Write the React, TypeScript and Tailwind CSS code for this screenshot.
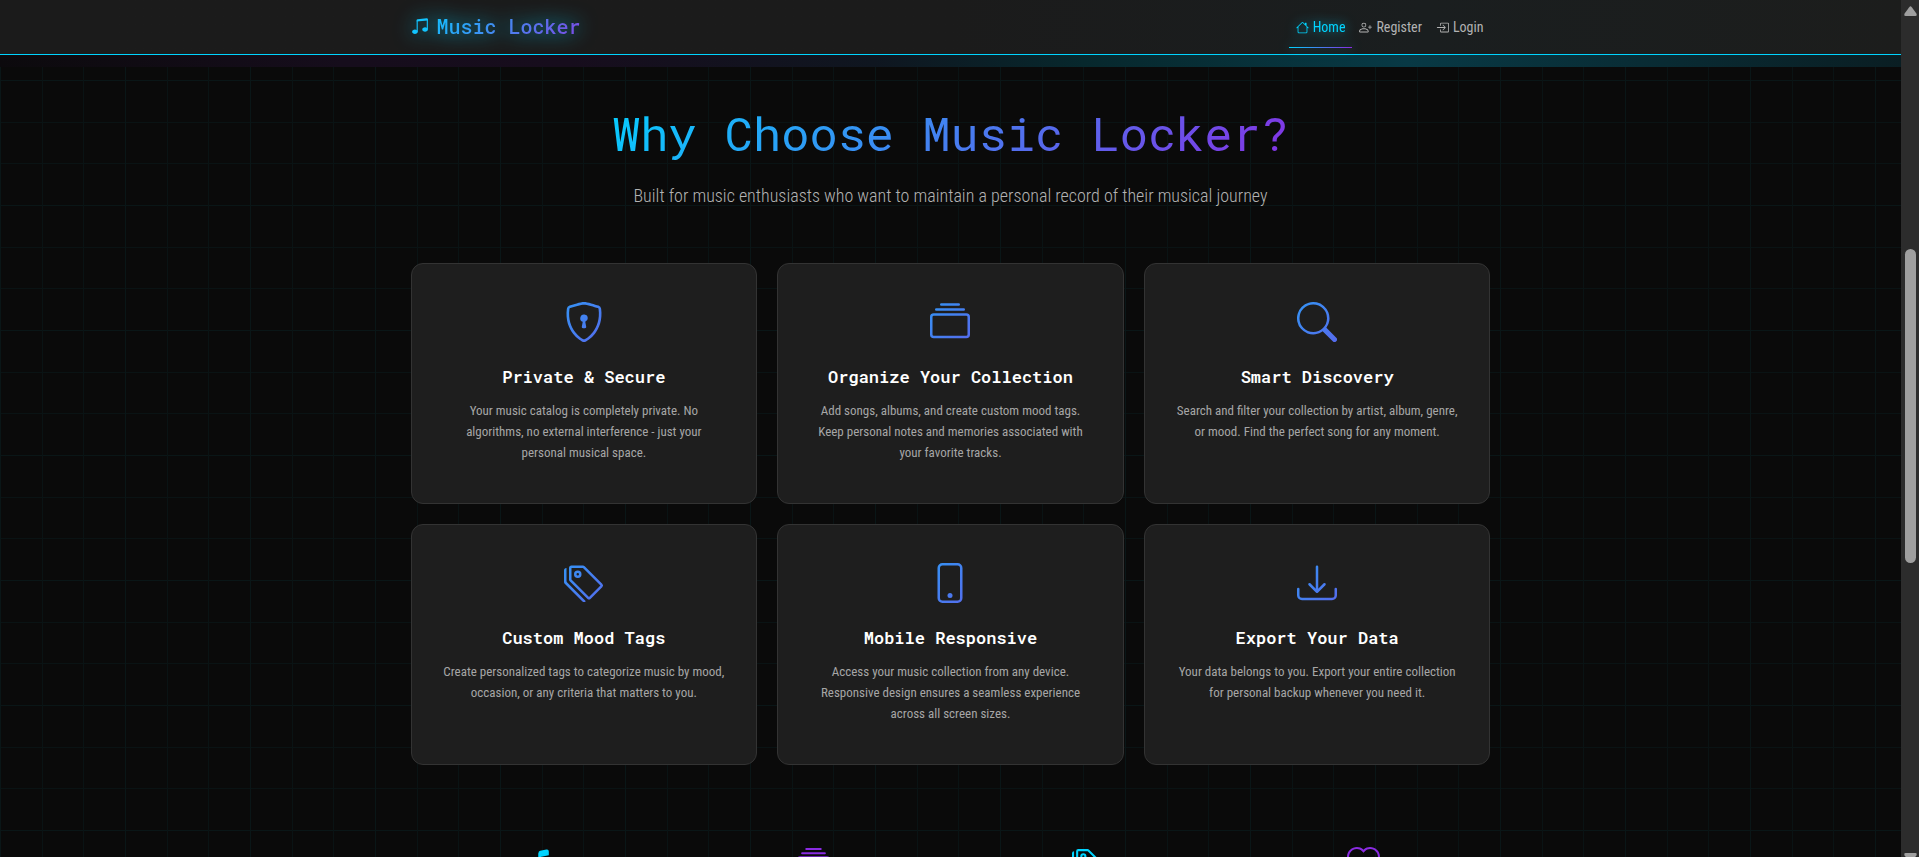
import type { IconType } from "react-icons";
import {
  BsBoxArrowInRight,
  BsCollection,
  BsDownload,
  BsHeart,
  BsHouse,
  BsMusicNote,
  BsMusicNoteBeamed,
  BsPersonPlus,
  BsPhone,
  BsSearch,
  BsShieldLock,
  BsTags,
} from "react-icons/bs";

type NavItem = { label: string; icon: IconType; active?: boolean };
type Feature = { title: string; text: string; icon: IconType };
type Stat = { name: string; icon: IconType; color: string };

const NAV: NavItem[] = [
  { label: "Home", icon: BsHouse, active: true },
  { label: "Register", icon: BsPersonPlus },
  { label: "Login", icon: BsBoxArrowInRight },
];

const FEATURES: Feature[] = [
  {
    title: "Private & Secure",
    text: "Your music catalog is completely private. No algorithms, no external interference - just your personal\u00a0musical space.",
    icon: BsShieldLock,
  },
  {
    title: "Organize Your Collection",
    text: "Add songs, albums, and create custom mood tags. Keep personal notes and memories associated with your favorite tracks.",
    icon: BsCollection,
  },
  {
    title: "Smart Discovery",
    text: "Search and filter your collection by artist, album, genre, or mood. Find the perfect song for any moment.",
    icon: BsSearch,
  },
  {
    title: "Custom Mood Tags",
    text: "Create personalized tags to categorize music by mood, occasion, or any criteria that matters to you.",
    icon: BsTags,
  },
  {
    title: "Mobile Responsive",
    text: "Access your music collection from any device. Responsive design ensures a seamless experience across all screen sizes.",
    icon: BsPhone,
  },
  {
    title: "Export Your Data",
    text: "Your data belongs to you. Export your entire collection for personal backup whenever you need it.",
    icon: BsDownload,
  },
];

const STATS: Stat[] = [
  { name: "songs", icon: BsMusicNote, color: "text-[#00d4ff]" },
  { name: "albums", icon: BsCollection, color: "text-[#8a2be2]" },
  { name: "tags", icon: BsTags, color: "text-[#00d4ff]" },
  { name: "favorites", icon: BsHeart, color: "text-[#8a2be2]" },
];

function GradientDefs() {
  return (
    <svg width="0" height="0" className="absolute" aria-hidden="true">
      <defs>
        <linearGradient id="icon-gradient" gradientUnits="userSpaceOnUse" x1="0" y1="0" x2="16" y2="16">
          <stop offset="0" stopColor="#3494f4" />
          <stop offset="1" stopColor="#566bed" />
        </linearGradient>
      </defs>
    </svg>
  );
}

function Navbar() {
  return (
    <header className="shrink-0 border-b border-[#00d4ff] bg-linear-to-r from-[#1b1b1b] from-50% via-[#1a1e1f] via-75% to-[#1c1d1c]">
      <div className="mx-auto flex h-[54px] max-w-[1080px] items-center justify-between">
        <a
          href="#top"
          className="flex items-center gap-2 pb-0.5 text-xl drop-shadow-[0_0_10px_rgba(0,212,255,0.9)]"
        >
          <BsMusicNoteBeamed className="size-[18px] text-[#12c4ff]" aria-hidden="true" />
          <span className="bg-linear-135/srgb from-[#12c0fd] to-[#8046e4] bg-clip-text font-['Roboto_Mono','DejaVu_Sans_Mono',monospace] font-medium text-transparent">
            Music Locker
          </span>
        </a>
        <nav className="flex h-full items-center">
          {NAV.map(({ label, icon: Icon, active }) => (
            <a
              key={label}
              href={`#${label.toLowerCase()}`}
              className={
                active
                  ? "relative flex h-[42px] items-center gap-1 px-[7px] text-[#00d4ff] drop-shadow-[0_0_6px_rgba(0,212,255,0.7)]"
                  : "relative flex h-[42px] items-center gap-1 px-[7px] text-[#b3b3b3]"
              }
            >
              <Icon className="size-[13px]" aria-hidden="true" />
              {label}
              {active && (
                <span className="absolute inset-x-0 bottom-0 h-px bg-linear-to-r/srgb from-[#00d4ff] to-[#8a2be2]" />
              )}
            </a>
          ))}
        </nav>
      </div>
    </header>
  );
}

function FeatureCard({ title, text, icon: Icon }: Feature) {
  return (
    <article className="flex min-h-[241px] flex-col items-center rounded-xl border border-[#333333] bg-[#1e1e1e] px-6 pt-[38px] text-center">
      <Icon className="size-10" fill="url(#icon-gradient)" aria-hidden="true" />
      <h3 className="mt-[23px] font-['Roboto_Mono','DejaVu_Sans_Mono',monospace] text-[17px] leading-6 font-semibold text-white">
        {title}
      </h3>
      <p className="mt-[11px] max-w-[286px] text-[13px] leading-[21px] font-normal text-[#a6a6a6]">{text}</p>
    </article>
  );
}

function Scrollbar() {
  return (
    <div className="relative flex w-[18px] shrink-0 flex-col items-center bg-[#2c2c2c]" aria-hidden="true">
      <svg viewBox="0 0 13 10" className="mt-1.5 h-2.5 w-[13px] shrink-0 fill-[#9f9f9f]">
        <path d="M5.2 1.2Q6.5-.6 7.8 1.2L12.4 7.6Q13.4 10 11.4 10H1.6Q-.4 10 .6 7.6Z" />
      </svg>
      <div className="mt-[233px] h-[314px] w-[11px] shrink-0 rounded-full bg-[#9f9f9f]" />
      <svg viewBox="0 0 13 10" className="absolute -bottom-1.5 h-2.5 w-[13px] fill-[#9f9f9f]">
        <path d="M5.2 8.8Q6.5 10.6 7.8 8.8L12.4 2.4Q13.4 0 11.4 0H1.6Q-.4 0 .6 2.4Z" />
      </svg>
    </div>
  );
}

export default function App() {
  return (
    <div className="flex h-screen overflow-hidden bg-[#0a0a0a] font-['Roboto_Condensed','Roboto',sans-serif] text-sm">
      <GradientDefs />
      <div className="flex min-w-0 flex-1 flex-col overflow-hidden bg-[linear-gradient(90deg,#0a1617_1px,transparent_1px,transparent_42px,#0a1314_42px,#0a1314_43px,transparent_43px,transparent_83px,#0a1314_83px,#0a1314_84px,transparent_84px),linear-gradient(#0a1617_1px,transparent_1px,transparent_42px,#0a1314_42px,#0a1314_43px,transparent_43px,transparent_83px,#0a1314_83px,#0a1314_84px,transparent_84px)] bg-size-[125px_125px] bg-position-[0_80px]">
        <Navbar />
        <div className="h-3 shrink-0 bg-[linear-gradient(90deg,#0c0a0d_0%,#160d1c_18%,#170d1d_30%,#0f1620_46%,#07282d_57%,#083945_74%,#0a1e23_100%)]" />
        <main className="mx-auto w-full max-w-[1080px] shrink-0">
          <section>
            <div className="mx-auto max-w-[733px] pt-[34px] text-center">
              <h1 className="bg-linear-135/srgb from-[#00d4ff] to-[#8a2be2] bg-clip-text font-['Roboto_Mono','DejaVu_Sans_Mono',monospace] text-[47px] leading-[64px] font-normal text-transparent">
                Why Choose Music Locker?
              </h1>
              <p className="mt-[17px] text-lg leading-7 font-light text-[#b3b3b3]">
                Built for music enthusiasts who want to maintain a personal record of their musical journey
              </p>
            </div>
            <div className="mt-[53px] grid grid-cols-3 gap-5">
              {FEATURES.map((feature) => (
                <FeatureCard key={feature.title} {...feature} />
              ))}
            </div>
          </section>
          <section className="-mx-2.5 mt-[82px] grid grid-cols-4 justify-items-center">
            {STATS.map(({ name, icon: Icon, color }) => (
              <Icon key={name} className={`size-[33px] ${color}`} aria-hidden="true" />
            ))}
          </section>
        </main>
      </div>
      <Scrollbar />
    </div>
  );
}
